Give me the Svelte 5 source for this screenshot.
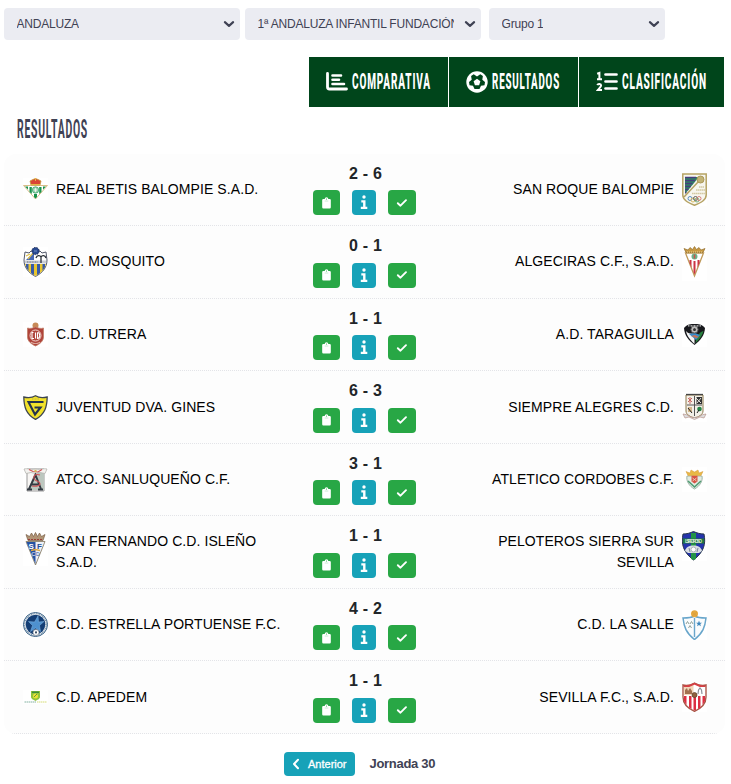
<script lang="ts">
  interface Team {
    name: string;
    crest: string;
    h: number;
    long?: boolean;
  }

  interface Match {
    home: Team;
    away: Team;
    score: string;
  }

  const selects = [
    { label: "ANDALUZA", cls: "select--wide" },
    { label: "1ª ANDALUZA INFANTIL FUNDACIÓN", cls: "select--wide select--gap" },
    { label: "Grupo 1", cls: "" },
  ];

  const tabs = [
    { icon: "chart", label: "COMPARATIVA", w: 79 },
    { icon: "ball", label: "RESULTADOS", w: 68 },
    { icon: "list", label: "CLASIFICACIÓN", w: 85 },
  ];

  const matches: Match[] = [
    {
      home: { name: "REAL BETIS BALOMPIE S.A.D.", crest: "betis", h: 22 },
      away: { name: "SAN ROQUE BALOMPIE", crest: "sanroque", h: 33 },
      score: "2 - 6",
    },
    {
      home: { name: "C.D. MOSQUITO", crest: "mosquito", h: 30 },
      away: { name: "ALGECIRAS C.F., S.A.D.", crest: "algeciras", h: 38 },
      score: "0 - 1",
    },
    {
      home: { name: "C.D. UTRERA", crest: "utrera", h: 25 },
      away: { name: "A.D. TARAGUILLA", crest: "taraguilla", h: 25 },
      score: "1 - 1",
    },
    {
      home: { name: "JUVENTUD DVA. GINES", crest: "gines", h: 25 },
      away: { name: "SIEMPRE ALEGRES C.D.", crest: "siempre", h: 30 },
      score: "6 - 3",
    },
    {
      home: { name: "ATCO. SANLUQUEÑO C.F.", crest: "sanluqueno", h: 25 },
      away: { name: "ATLETICO CORDOBES C.F.", crest: "cordobes", h: 25 },
      score: "3 - 1",
    },
    {
      home: { name: "SAN FERNANDO C.D. ISLEÑO S.A.D.", crest: "sanfernando", h: 35, long: true },
      away: { name: "PELOTEROS SIERRA SUR SEVILLA", crest: "peloteros", h: 30, long: true },
      score: "1 - 1",
    },
    {
      home: { name: "C.D. ESTRELLA PORTUENSE F.C.", crest: "estrella", h: 25 },
      away: { name: "C.D. LA SALLE", crest: "lasalle", h: 30 },
      score: "4 - 2",
    },
    {
      home: { name: "C.D. APEDEM", crest: "apedem", h: 14 },
      away: { name: "SEVILLA F.C., S.A.D.", crest: "sevilla", h: 30 },
      score: "1 - 1",
    },
  ];
</script>

{#snippet crest(t: Team)}
  <svg class="crest" width="25" height={t.h} viewBox="0 0 25 {t.h}">
    <rect width="25" height={t.h} fill="#fff" />
    {#if t.crest === "betis"}
      <path d="M.5 7.500h24L12.500 21Z" fill="#fff" stroke="#d9bd88" />
      <path d="M2 8.500h3v3ZM6.500 9h2.300v7l-2.300-2ZM16.200 9h2.300v5l-2.300 2ZM20 8.500h3l-3 3ZM11 16h3v3l-1.500 1.500L11 19Z" fill="#17924b" />
      <circle cx="12.500" cy="12" r="3.200" fill="#9ed3b2" stroke="#3fa76b" stroke-width=".8" />
      <path d="M12.500 10v4M11 12h3" stroke="#fff" stroke-width=".7" />
      <path d="M8 7 7 3l3-1.500L12.500.5 15 1.500l3 1.500-1 4Z" fill="#d94535" stroke="#c49432" stroke-width=".8" />
      <path d="M8 6.500h9M12.500 0v3" stroke="#e4b646" />
    {:else if t.crest === "sanroque"}
      <path d="M.8 1h23.400v21c0 5-5 7.500-11.700 10.300C5.800 29.500.8 27 .8 22Z" fill="#f7f6ef" stroke="#b5a263" stroke-width="1.500" />
      <path d="M3 4h14L3 21Z" fill="#2f8065" />
      <path d="M3 4.500h11M3 7.500h10M3 10.500h7.500M3 13.500h6M3 16.500h3.500M3 19.500h1.500" stroke="#473d7e" stroke-width="1.700" />
      <path d="M2 24 17 8" stroke="#b5a263" stroke-width="1.500" />
      <circle cx="18.500" cy="6.500" r="3.500" fill="#c2b376" stroke="#ab9858" />
      <path d="M17 14h5M14 17h9M10 20.500h13" stroke="#d3c9a2" stroke-width="1.600" stroke-dasharray="1.500 .4" />
      <g fill="none" stroke-width=".9"><circle cx="8" cy="25.500" r="2" stroke="#4b86bd" /><circle cx="11" cy="27" r="2" stroke="#d8b356" /><circle cx="13.500" cy="25.500" r="2" stroke="#555" /><circle cx="15" cy="27" r="2" stroke="#6ba877" /><circle cx="17" cy="25.500" r="2" stroke="#d4766e" /></g>
    {:else if t.crest === "mosquito"}
      <path d="M2 5 1 13c0 8 5 13 11.500 16.500C19 26 24 21 24 13l-1-8-4 1-2-2H8L6 6Z" fill="#fff" stroke="#53596a" />
      <path d="m3 13 8-8v8Z" fill="#4667b4" />
      <path d="m5 12 5-6M3 9l4-2" stroke="#dfc14a" stroke-width="1.200" />
      <path d="M2 17h21c-1 5-5 9-10.500 12C7 26 3 22 2 17Z" fill="#e8c52f" />
      <path d="M3 17h2.500v7L3 20ZM8 17h3v11l-3-2ZM14 17h3v9l-3 2ZM19.500 17H22v3l-2.500 4Z" fill="#365aaa" />
      <path d="M2 13.500h21v3H2Z" fill="#c8ccd4" /><path d="M4 15h11" stroke="#666d7d" stroke-dasharray="1 .6" />
      <path d="M18 9v7M13 11c1-3 4-3 5-1 1-2 4-2 5 1" fill="none" stroke="#2b3037" stroke-width="1.300" />
      <circle cx="12.500" cy="4" r="3.600" fill="#27488f" stroke="#1c2a55" stroke-dasharray="1.500 1" />
      <path d="m11 3 3 2m-3 0 3-2" stroke="#6884c2" stroke-width=".7" />
    {:else if t.crest === "algeciras"}
      <path d="M3.500 10h18l-9 23Z" fill="#fff" stroke="#c09a5a" stroke-width="1.300" />
      <path d="M7.500 17h2v7.500l-2-4.500ZM11.500 18h2v11l-1 2.500-1-2.500ZM15.500 17h2v3l-2 4.500Z" fill="#cc3442" />
      <circle cx="12.500" cy="13.500" r="3" fill="#6cb28b" /><path d="M12.500 11.500v4" stroke="#cf504b" stroke-width="1.500" />
      <path d="M4 9.500 2 5.500 6 7l2-2.500 2.500 2L12.500 3.500l2 3 2.500-2L19 7l4-1.500-2 4Z" fill="#c69842" stroke="#94702f" stroke-width=".7" />
      <path d="M5 9h15" stroke="#f1d692" stroke-dasharray="1 1" />
    {:else if t.crest === "utrera"}
      <circle cx="12.500" cy="3.500" r="3" fill="#c78a58" />
      <path d="M4.500 6c3 1 5 0 8-1 3 1 5 2 8 1v9c0 4-3.500 7-8 9-4.500-2-8-5-8-9Z" fill="#b0443b" stroke="#c27f68" stroke-width=".8" />
      <circle cx="12.500" cy="13.500" r="5.500" fill="#b0443b" stroke="#f3d8d0" />
      <path d="M10.500 10.500H9v6h2m1.500-6v6m2-6v6c3 0 3-6 0-6" fill="none" stroke="#fff" stroke-width="1.100" />
      <path d="M8 20c2 2 7 2 9 0" fill="none" stroke="#e7c3b6" />
    {:else if t.crest === "taraguilla"}
      <path d="M2 6c3-4 7-4 10.500-4S20 2 23 6c-.5 7-4 12-10.500 17C6 18 2.500 13 2 6Z" fill="#17181c" />
      <path d="M4 9c3 4 6 2 8.500 3v10C7.500 17 5 14 4 9Z" fill="#f5f5f5" />
      <path d="M21.500 9c-4 1-7 5-8 12C18 17 20.500 13 21.500 9Z" fill="#27813e" />
      <path d="m7 12 7 6 4-5-5-2Z" fill="#378bc9" /><path d="m9 14 4-1 4 2-3 1Z" fill="#c77155" />
      <circle cx="12.500" cy="7.500" r="3.600" fill="#bbb" stroke="#555" /><path d="m11 7 1.500-1 1.500 1-.5 2h-2Z" fill="#333" />
      <path d="M6 3.800h13" stroke="#ccc" stroke-width="1.200" stroke-dasharray="1 .5" />
    {:else if t.crest === "gines"}
      <path d="M.8 2c4 1 8 1 11.700-1.200C16 3 20 3 24.200 2 24 12 22 19 12.500 24.400 3 19 1 12 .8 2Z" fill="#f2e22a" stroke="#3d4550" stroke-width="1.300" />
      <path d="M20.500 7H5.500l6.500 12.500 5.500-7h-6" fill="none" stroke="#26344c" stroke-width="2.100" />
      <path d="M9 4h7" stroke="#b3a84e" stroke-width=".8" stroke-dasharray="1 .5" />
    {:else if t.crest === "siempre"}
      <path d="M4 3h17v16c0 4-5 6-8.500 7C9 25 4 23 4 19Z" fill="#f3f0e8" stroke="#8b784c" />
      <path d="M4 2.500h17" stroke="#454545" stroke-width="1.300" />
      <path d="M12.500 4v20M5 13h15" stroke="#555" />
      <path d="m6 6 4 4m0-4-4 4M8 5v7" stroke="#c8665f" /><path d="M14.500 5H20v7h-5.500Z" fill="#333" /><path d="m14 6 5 5m0-5-4 5" stroke="#e1dfda" />
      <path d="M6 15h4v5H6Z" fill="#d5b88c" /><circle cx="17.500" cy="17" r="2.300" fill="#248345" /><path d="m6 16 4 5M15 21l2-3" stroke="#202020" />
      <path d="M1 22c5 0 7 4 11.500 3.500C17 26 19 22 24 22l-2 4-4-1-5.500 2.500L7 25l-4 1Z" fill="#ddd" stroke="#b7938d" stroke-width=".7" />
    {:else if t.crest === "sanluqueno"}
      <path d="M4 2h17v22H4Z" fill="#f8f6f4" stroke="#999" />
      <path d="M12 5h9v18H5Z" fill="#bcc7bf" />
      <path d="M1 2c4-1 5 1 11.500 0C19 3 20 1 24 2l-2 4.500-5-1-4.500 1L8 5.500 3 6.500Z" fill="#f4f3f0" stroke="#b5b5b0" stroke-width=".8" />
      <path d="m6 22 6.500-14L18 22M8.500 17.500h8M4 22.500h5M15 22.500h5" fill="none" stroke="#333942" stroke-width="1.900" />
      <path d="M17 8c-7-2-8 4-3 6s4 6-5 5M6 2.500l4 2 5 .5 4-2.500" fill="none" stroke="#d05358" stroke-width="1.100" />
      <circle cx="12.500" cy="4" r="1.200" fill="#d5ba5a" />
    {:else if t.crest === "cordobes"}
      <path d="M5 9h15c1 5-2 10-7.500 13C7 19 4 14 5 9Z" fill="#e3ece3" stroke="#9fb5a8" />
      <path d="m6 14 6.500 6 6.500-6" fill="none" stroke="#4f9c74" stroke-width="1.600" />
      <path d="M9.500 8.500h6v6l-3 2-3-2Z" fill="#d85246" /><path d="m10.500 11 4 3m0-3-4 3" stroke="#e8ccb4" />
      <path d="M6 8.500 4 4.500l4 1.500 1-3 3.500 2L16 3l1 3 4-1.500-2 4Z" fill="#e8b945" stroke="#d7993b" stroke-width=".5" />
    {:else if t.crest === "sanfernando"}
      <path d="M3 10.500h19L12.500 34Z" fill="#edf1f8" stroke="#8b806b" stroke-width=".9" />
      <path d="M3.500 11h9v22Z" fill="#2451a4" />
      <path d="m8 19.500 4.500-1 4.500 1" stroke="#dfa844" fill="none" stroke-width="1.500" />
      <text x="5.500" y="17.500" font-size="8" font-weight="700" fill="#fff">S</text>
      <text x="14" y="17.500" font-size="8" font-weight="700" fill="#244d99">F</text>
      <text x="8.500" y="25" font-size="5" fill="#fff">C</text>
      <text x="13" y="25" font-size="5" fill="#244d99">D</text>
      <path d="M5 9.500 3 3.500l3.500 2L8.500 2l2 3.500 2-4 2 4 2-3.500 2 3.500L22 3.500 20 9.500Z" fill="#b19475" stroke="#795f47" stroke-width=".7" />
      <path d="M5 8.500h15" stroke="#9b3d36" stroke-width="1.200" stroke-dasharray="2 1" />
    {:else if t.crest === "peloteros"}
      <path d="M1 3c4 0 7-1 10.500-2.500C15 2 18 3 22 3c2 10 0 18-10.500 26C1 21-1 13 1 3Z" fill="#2534ad" stroke="#29394a" />
      <path d="M9 2h5v26l-2.500 1L9 28Z" fill="#249447" /><path d="M1 7.500h21v5H1Z" fill="#1e7840" />
      <text x="3" y="11.700" font-size="4.500" font-weight="700" fill="#dce8d9" textLength="17">L.S.PEDROSO</text>
      <path d="M3 20c1-4 4-5.500 8.500-5.500S19 16 20 20l-3 2H6Z" fill="#d9dee4" /><circle cx="11.500" cy="18.500" r="2.500" fill="#fff" stroke="#aab2ba" />
      <path d="m7 17 1 4m8-4-1 4" stroke="#7d8996" />
    {:else if t.crest === "estrella"}
      <circle cx="12.500" cy="12.500" r="12" fill="#f0f4f7" stroke="#345d83" />
      <circle cx="12.500" cy="12.500" r="10.800" fill="none" stroke="#7a93a9" stroke-width="1.200" stroke-dasharray="1 .7" />
      <circle cx="12.500" cy="12.500" r="9.800" fill="#143e75" />
      <path d="m15 4 .5 6 5.500-.5-4.500 4 1 6-5-3.500-5 3.500 2-6-4-4 6 .5Z" fill="#4e91cf" stroke="#86b9e3" stroke-width=".5" />
      <circle cx="13" cy="20.500" r="3" fill="#fff" stroke="#74808e" stroke-width=".7" /><path d="m12 20 1-1 1 1-.4 1.500h-1.200Z" fill="#253a55" />
    {:else if t.crest === "lasalle"}
      <path d="M1 8c4 0 8 0 11.500-2C16 8 20 8 24 8c-1 9-3 15-11.500 21.500C4 23 2 17 1 8Z" fill="#fafcfd" stroke="#69a6cb" stroke-width="1.500" />
      <path d="M12.500 8v19" stroke="#69a6cb" stroke-width="1.400" />
      <path d="m4 14 1.500-2.500L7 14m1 0 1.500-2.500L11 14M6.500 18 8 15.500 9.500 18" fill="none" stroke="#92a29a" />
      <path d="m17 10.500.8 2.200H20L18.300 14l.6 2.200-1.900-1.300-1.900 1.300.6-2.200-1.700-1.300h2.200Z" fill="#3d87bd" />
      <circle cx="12.500" cy="3.700" r="3.500" fill="#e5a93f" /><path d="m10 2 5 4m0-4-5 4" stroke="#d59b3a" stroke-width=".6" />
    {:else if t.crest === "apedem"}
      <path d="M8 1h9v6c0 2-3 3-4.500 4C11 10 8 9 8 7Z" fill="#8fc43c" />
      <path d="M9 1.500h7v1.500H9Z" fill="#388c3c" /><circle cx="12.500" cy="6" r="2.500" fill="#ebe334" /><path d="m11 7 3-3" stroke="#669a39" />
      <path d="M1.500 12h12" stroke="#83b1a1" stroke-dasharray="1.500 .5" /><path d="M14 12h10" stroke="#d5dc77" stroke-dasharray="1.500 .5" />
    {:else}
      <path d="M1 3c4 1 8 0 11.500-2C16 3 20 4 24 3v12c0 7-4 11-11.500 14.300C5 26 1 22 1 15Z" fill="#fff" stroke="#a95849" stroke-width="1.400" />
      <path d="M2 14h2.500v9L2 19ZM7 14h2.500v13L7 25.500ZM11.500 14H14v14l-1.500.5-1-.5ZM16 14h2.500v11.500L16 27ZM20.500 14H23v5l-2.500 4Z" fill="#dc2f42" />
      <path d="M2 4.500c4 1 7 0 9.500-2V13H2Z" fill="#f2d7ba" /><path d="M3 12V8l2-2 1 3 2-3 2 3v3Z" fill="#a27050" /><path d="M1.500 4.200c4 .4 7 0 11-2.500 4 2.500 7 2.900 11 2.500" fill="none" stroke="#d54045" stroke-width="1.600" />
      <path d="m16 12 .5-4 1.500-2 1.500 2 .5 4" fill="none" stroke="#8c8f99" stroke-width="1.200" />
      <circle cx="12.500" cy="13" r="2.500" fill="#90623f" stroke="#5f402d" stroke-width=".7" />
    {/if}
  </svg>
{/snippet}

<div class="page">
  <div class="filters">
    {#each selects as s}
      <div class="select {s.cls}">
        <span class="select-label">{s.label}</span>
        <svg width="12" height="12" viewBox="0 0 16 16"><path d="m2.500 5.500 5.500 5 5.500-5" fill="none" stroke="#3f4254" stroke-width="2.800" stroke-linecap="round" stroke-linejoin="round" /></svg>
      </div>
    {/each}
  </div>

  <nav class="tabs">
    {#each tabs as tab}
      <a class="tab tab--{tab.icon}" href="#{tab.icon}">
        <svg width="22" height="22" viewBox="0 0 22 22" fill="none" stroke="#fff" stroke-linecap="round">
          {#if tab.icon === "chart"}
            <path d="M1.500 2.500V16c0 1.500.5 2 2 2h17" stroke-width="2.800" />
            <path d="M6.500 4.500H15M6.500 8.800H13M6.500 13H18" stroke-width="2.600" />
          {:else if tab.icon === "ball"}
            <circle cx="11" cy="11" r="10.700" fill="#fff" stroke="none" />
            <path d="m11 5.500 3.300-2.300 2.600 1.900-.6 3.600 2.700 2.200-.5 3.300-3.500.5-1.500 3.200h-5L7 14.700l-3.500-.5-.5-3.300 2.700-2.200-.6-3.600 2.600-1.900Z" fill="#00451b" stroke="none" />
            <path d="m11 7.800 3.400 2.500-1.300 4H8.900l-1.300-4Z" fill="#fff" stroke="none" />
          {:else}
            <path d="M9.500 3.500h11M9.500 10.500h11M9.500 17.500h11" stroke-width="2.700" />
            <path d="m1.200 2.800 2.200-.8v6.500M1 8.300h5" stroke-width="2" stroke-linecap="butt" />
            <path d="M1.200 14c1-1.700 3.900-1.200 3.900.4 0 1.300-1.700 2.600-3.200 4.500H6" stroke-width="2" stroke-linecap="butt" />
          {/if}
        </svg>
        <svg class="narrow" width={tab.w} height="26" viewBox="0 0 {tab.w} 26">
          <text x="0" y="20.200" font-size="21.500" font-weight="800" letter-spacing="1.800" fill="#fff" textLength={tab.w} lengthAdjust="spacingAndGlyphs">{tab.label}</text>
        </svg>
      </a>
    {/each}
  </nav>

  <h2 class="title">
    <svg class="narrow" width="71" height="28" viewBox="0 0 71 28">
      <text x="0" y="23" font-size="25" font-weight="700" letter-spacing="1.800" fill="#3f4254" textLength="71" lengthAdjust="spacingAndGlyphs">RESULTADOS</text>
    </svg>
  </h2>

  <div class="matches">
    {#each matches as m}
      <div class="match">
        <div class="team" class:team--long={m.home.long}>
          {@render crest(m.home)}
          <span class="team-name">{m.home.name}</span>
        </div>
        <div class="result">
          <div class="score">{m.score}</div>
          <div class="actions">
            <button class="btn btn--clip" aria-label="Acta">
              <svg width="9" height="12" viewBox="0 0 10 13" fill="#fff"><path d="M1.500 2H3a2 2 0 0 1 4 0h1.500A1.300 1.300 0 0 1 9.800 3.300v7.900a1.300 1.300 0 0 1-1.300 1.300h-7A1.300 1.300 0 0 1 .2 11.200V3.300A1.300 1.300 0 0 1 1.500 2Z" /><path d="M3 4.300h4" stroke="#b8e2c1" stroke-width=".8" /><circle cx="5" cy="2" r=".6" fill="#28a745" /></svg>
            </button>
            <button class="btn btn--info" aria-label="Información">
              <svg width="8" height="15" viewBox="0 0 8 15" fill="#fff"><circle cx="4" cy="2" r="1.700" /><path d="M1.300 5.300h4.200v6.500h1.800V14H.8v-2.200h2.300V7.500H1.300Z" /></svg>
            </button>
            <button class="btn btn--ok" aria-label="Validado">
              <svg width="12" height="10" viewBox="0 0 12 10"><path d="m1.800 5.200 2.700 2.500 5.500-5.500" fill="none" stroke="#fff" stroke-width="1.900" stroke-linecap="round" stroke-linejoin="round" /></svg>
            </button>
          </div>
        </div>
        <div class="team team--away" class:team--long={m.away.long}>
          <span class="team-name">{m.away.name}</span>
          {@render crest(m.away)}
        </div>
      </div>
    {/each}
  </div>

  <div class="pager">
    <button class="prev">
      <svg width="8" height="12" viewBox="0 0 8 12"><path d="M6 1.800 2 6l4 4.200" fill="none" stroke="#fff" stroke-width="2" stroke-linecap="round" stroke-linejoin="round" /></svg>
      <span>Anterior</span>
    </button>
    <span class="round">Jornada 30</span>
  </div>
</div>

<style>
  :global(body) {
    margin: 0;
    background: #fff;
  }
  .page {
    box-sizing: border-box;
    width: 731px;
    height: 784px;
    padding: 8px 6px 0 4px;
    overflow: hidden;
    font-family: "Liberation Sans", Arial, sans-serif;
    color: #3f4254;
  }
  .filters {
    display: flex;
    gap: 5px;
  }
  .select {
    box-sizing: border-box;
    display: flex;
    align-items: center;
    justify-content: space-between;
    width: 176px;
    height: 32px;
    padding: 0 5px 0 12.5px;
    border-radius: 4px;
    background: #ebecf2;
    font-size: 12px;
    letter-spacing: -0.2px;
  }
  .select--wide { width: 236px; }
  .select--gap { margin-right: 3px; }
  .select-label {
    overflow: hidden;
    max-width: 196px;
    white-space: nowrap;
  }
  .select svg { flex-shrink: 0; }
  .tabs {
    display: flex;
    justify-content: flex-end;
    gap: 1px;
    height: 50px;
    margin: 17px 1px 0 0;
  }
  .tab {
    box-sizing: border-box;
    display: flex;
    align-items: center;
    gap: 4px;
    padding-left: 17px;
    background: #00451b;
  }
  .tab--chart { width: 139px; }
  .tab--ball { width: 129px; }
  .tab--list { width: 145px; }
  .narrow {
    display: block;
    overflow: visible;
    font-family: Roboto, "Liberation Sans", sans-serif;
  }
  .title {
    margin: 8px 0 0 13px;
    height: 38.600px;
  }
  .matches {
    width: 721px;
    border-radius: 12px;
    background: #fdfdfd;
    overflow: hidden;
  }
  .match {
    box-sizing: border-box;
    display: grid;
    grid-template-columns: 299px 123px 1fr;
    height: 72.560px;
    border-bottom: 1px dotted #e3e4e8;
  }
  .team {
    display: flex;
    align-items: center;
    gap: 8px;
    padding: 0 14px 0 19px;
    font-size: 14px;
    line-height: 21px;
    letter-spacing: 0.08px;
    color: #000;
  }
  .team--away {
    justify-content: flex-end;
    padding: 0 18px 0 50px;
    text-align: right;
  }
  .team--long {
    align-items: flex-start;
    padding-top: 15px;
  }
  .crest { flex-shrink: 0; }
  .score {
    padding: 11px 0 0 2px;
    font-size: 16px;
    font-weight: 700;
    line-height: 18px;
    letter-spacing: 0.2px;
    text-align: center;
    color: #212529;
  }
  .actions {
    display: flex;
    justify-content: center;
    gap: 12px;
    padding-top: 7.500px;
  }
  .btn {
    display: flex;
    align-items: center;
    justify-content: center;
    width: 27px;
    height: 25px;
    padding: 0;
    border: 0;
    border-radius: 4px;
    background: #28a745;
  }
  .btn--info {
    width: 24px;
    background: #17a2b8;
  }
  .btn--ok { width: 28px; }
  .pager {
    display: flex;
    align-items: center;
    gap: 14.500px;
    padding: 18px 0 0 280px;
  }
  .prev {
    display: flex;
    align-items: center;
    gap: 8px;
    width: 71px;
    height: 24px;
    padding: 0 0 0 8px;
    border: 0;
    border-radius: 4px;
    background: #17a2b8;
    font-family: inherit;
    font-size: 11px;
    color: #fff;
    -webkit-text-stroke: 0.3px #fff;
  }
  .round {
    font-size: 13px;
    font-weight: 700;
    letter-spacing: -0.3px;
  }
</style>
